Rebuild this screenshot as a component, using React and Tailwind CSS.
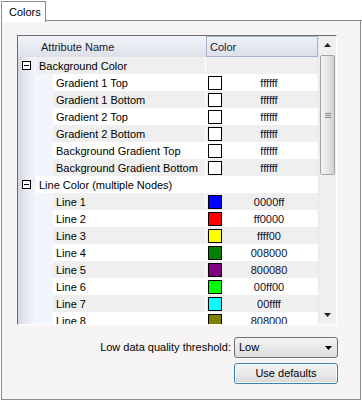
import React from "react";

const rows = [
  { cat: true, name: "Background Color" },
  { name: "Gradient 1 Top", color: "#ffffff", hex: "ffffff" },
  { name: "Gradient 1 Bottom", color: "#ffffff", hex: "ffffff" },
  { name: "Gradient 2 Top", color: "#ffffff", hex: "ffffff" },
  { name: "Gradient 2 Bottom", color: "#ffffff", hex: "ffffff" },
  { name: "Background Gradient Top", color: "#ffffff", hex: "ffffff" },
  { name: "Background Gradient Bottom", color: "#ffffff", hex: "ffffff" },
  { cat: true, name: "Line Color (multiple Nodes)" },
  { name: "Line 1", color: "#0000ff", hex: "0000ff" },
  { name: "Line 2", color: "#ff0000", hex: "ff0000" },
  { name: "Line 3", color: "#ffff00", hex: "ffff00" },
  { name: "Line 4", color: "#008000", hex: "008000" },
  { name: "Line 5", color: "#800080", hex: "800080" },
  { name: "Line 6", color: "#00ff00", hex: "00ff00" },
  { name: "Line 7", color: "#00ffff", hex: "00ffff" },
  { name: "Line 8", color: "#808000", hex: "808000" },
];

function Row({ r, i }) {
  const bg = i % 2 === 0 ? "bg-[#efefef]" : "bg-white";
  return (
    <div className="flex h-[17px] shrink-0">
      <div className="w-[17px] h-full shrink-0 bg-gradient-to-r from-[#d3d6df] via-[#e9ebf3] to-[#f1f3fb] flex items-center justify-center">
        {r.cat && (
          <div className="w-[9px] h-[9px] border border-black bg-white flex items-center justify-center">
            <div className="w-[5px] h-px bg-black" />
          </div>
        )}
      </div>
      {r.cat ? (
        <div className={`w-[170px] h-full shrink-0 ${bg} border-l border-[#f7f7fb] flex items-center pl-[3px] pt-px text-black whitespace-nowrap overflow-hidden`}>
          {r.name}
        </div>
      ) : (
        <>
          <div className="w-[18px] h-full shrink-0 bg-[#f3f5fd]" />
          <div className={`w-[152px] h-full shrink-0 ${bg} flex items-center pl-[3px] pt-px text-black whitespace-nowrap overflow-hidden`}>
            {r.name}
          </div>
        </>
      )}
      <div className="w-px h-full shrink-0 bg-white" />
      <div className={`w-[112px] h-full shrink-0 ${bg} flex items-center`}>
        {!r.cat && (
          <>
            <div className="ml-[2px] w-[14px] h-[14px] border border-black shrink-0" style={{ backgroundColor: r.color }} />
            <div className="flex-1 text-center text-[#10102a] pr-[2px] pt-px">{r.hex}</div>
          </>
        )}
      </div>
    </div>
  );
}

export default function App() {
  return (
    <div className="w-[362px] h-[402px] bg-white font-['Liberation_Sans',Arial,sans-serif] text-[11px] leading-none text-black pl-[1px] flex flex-col">
      <div className="h-[21px] flex items-end shrink-0 pt-px">
        <div className="w-[45px] h-[21px] border border-b-0 border-[#898c95] bg-white flex items-center pl-[7px] relative z-10 -mb-px">
          Colors
        </div>
        <div className="flex-1 border-b border-[#898c95]" />
      </div>
      <div className="w-[360px] h-[379px] border border-t-0 border-[#898c95] bg-[#f7f4f6] pt-[14px] pl-[15px] pr-[22px] flex flex-col">
        <div className="w-[320px] h-[290px] border border-t-[#6b6b6b] border-l-[#6b6b6b] border-r-[#fdfdfd] border-b-[#fdfdfd] bg-white flex shrink-0">
          <div className="w-[300px] flex flex-col">
            <div className="h-[21px] flex shrink-0 bg-gradient-to-b from-[#f3f4f9] to-[#dde0ea]">
              <div className="w-[188px] h-full flex items-center pl-[23px] pt-px text-[#1b1b2e]">Attribute Name</div>
              <div className="w-[112px] h-full border border-[#a6b4cb] bg-gradient-to-b from-[#eef0f7] to-[#dce0ec] flex items-center pl-[3px] pt-px text-[#1b1b2e]">
                Color
              </div>
            </div>
            <div className="flex-1 overflow-hidden flex flex-col">
              {rows.map((r, i) => (
                <Row key={i} r={r} i={i} />
              ))}
            </div>
          </div>
          <div className="w-[18px] h-full bg-[#f1f0f1] border-l border-[#e6e6e6] flex flex-col items-center">
            <div className="h-[18px] w-full flex items-center justify-center">
              <svg width="7" height="4" viewBox="0 0 7 4"><path d="M3.5 0 L7 4 L0 4 Z" fill="#222" /></svg>
            </div>
            <div className="w-[15px] h-[120px] mt-px rounded-[2px] border border-[#a3a3a3] bg-gradient-to-r from-[#f4f4f4] via-[#e6e6e6] to-[#cfcfcf] flex items-center justify-center">
              <div className="flex flex-col gap-px">
                <div className="w-[6px] h-px bg-[#8a8a8a]" />
                <div className="w-[6px] h-px bg-[#8a8a8a]" />
                <div className="w-[6px] h-px bg-[#8a8a8a]" />
              </div>
            </div>
            <div className="flex-1" />
            <div className="h-[18px] w-full flex items-center justify-center">
              <svg width="7" height="4" viewBox="0 0 7 4"><path d="M0 0 L7 0 L3.5 4 Z" fill="#222" /></svg>
            </div>
          </div>
        </div>
        <div className="mt-[12px] flex justify-end items-center">
          <span className="mr-[3px] text-black">Low data quality threshold:</span>
          <div className="w-[104px] h-[21px] border border-[#707070] rounded-[3px] bg-gradient-to-b from-[#f3f3f3] to-[#dddddd] flex items-center pl-[4px] pr-[5px]">
            <span className="flex-1">Low</span>
            <svg width="7" height="4" viewBox="0 0 7 4"><path d="M0 0 L7 0 L3.5 4 Z" fill="#000" /></svg>
          </div>
        </div>
        <div className="mt-[5px] flex justify-end">
          <div className="w-[104px] h-[21px] border border-[#3c7fb1] rounded-[3px] bg-gradient-to-b from-[#f2f2f2] via-[#ebebeb] to-[#d6d6d6] shadow-[inset_0_0_0_1px_#f8fbfd] flex items-center justify-center text-black">
            Use defaults
          </div>
        </div>
      </div>
    </div>
  );
}
